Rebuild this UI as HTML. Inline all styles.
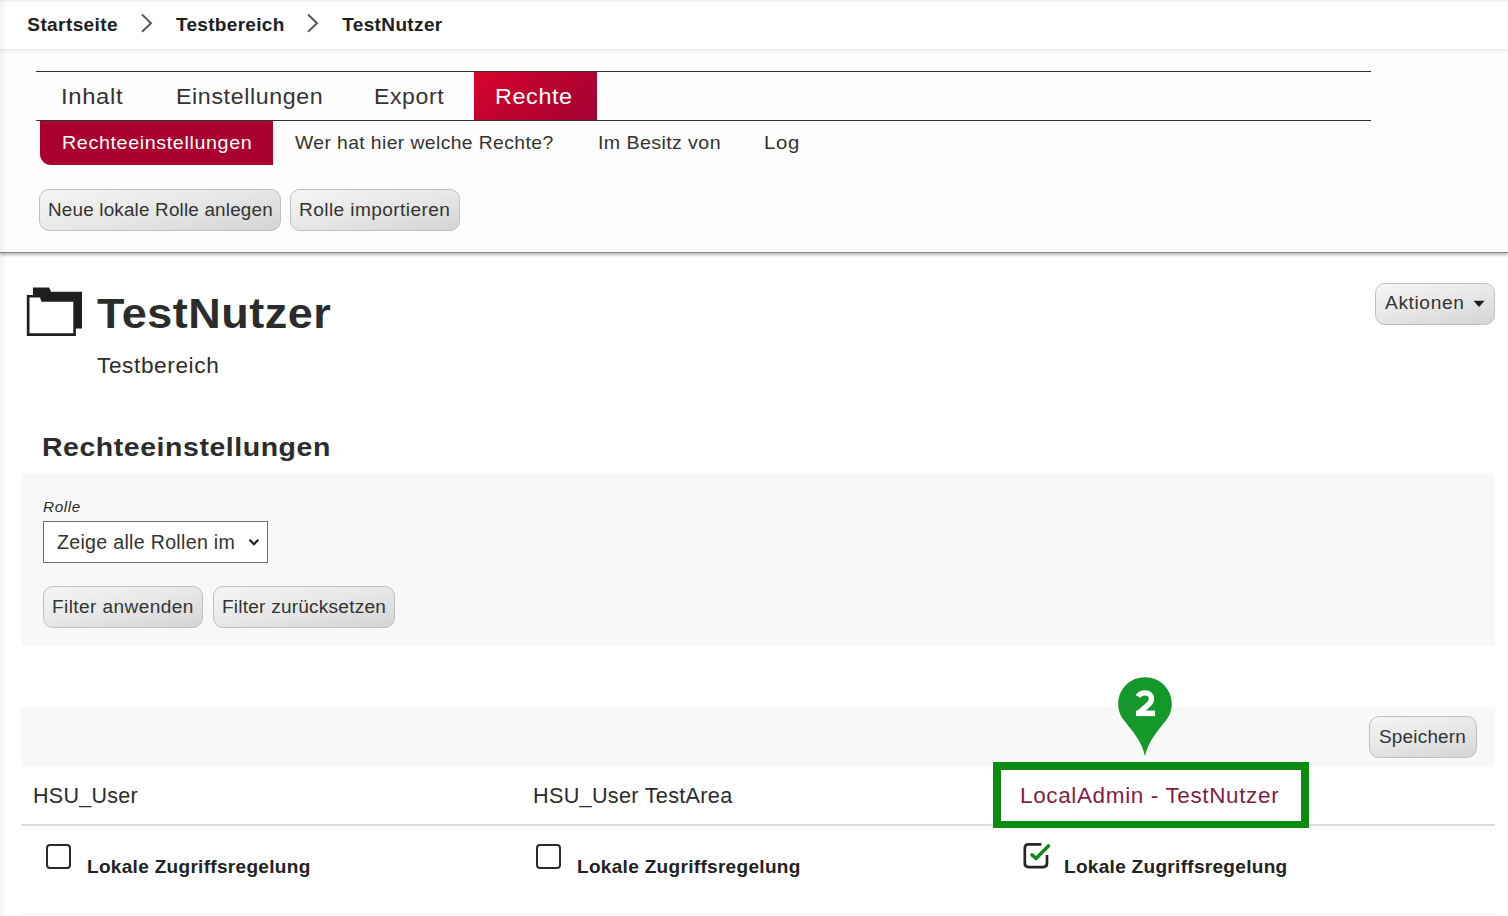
<!DOCTYPE html>
<html><head><meta charset="utf-8"><style>
html,body{margin:0;padding:0;width:1508px;height:916px;overflow:hidden;background:#fff;font-family:"Liberation Sans",sans-serif}
.a{position:absolute;box-sizing:border-box}
.t{position:absolute;white-space:pre;font-family:"Liberation Sans",sans-serif}
.btn{position:absolute;box-sizing:border-box;background:linear-gradient(168deg,#f5f5f5 0%,#e7e7e7 50%,#d4d4d4 100%);border:1px solid #c0c0c0;border-radius:10px;}
</style></head><body>
<!-- header area -->
<div class="a" style="left:0;top:0;width:1508px;height:253px;background:#fdfdfd;border-bottom:1px solid #858585;box-shadow:0 2px 3px rgba(0,0,0,.28)"></div>
<div class="a" style="left:0;top:0;width:1508px;height:49px;background:linear-gradient(#ececec 0,#fff 3px);box-shadow:0 1px 4px rgba(0,0,0,.12)"></div>
<svg class="a" style="left:0;top:0" width="500" height="48">
<path d="M142,14.5 L151,23.2 L142,31.8" fill="none" stroke="#5a5a5a" stroke-width="2"/>
<path d="M308,14.5 L317,23.2 L308,31.8" fill="none" stroke="#5a5a5a" stroke-width="2"/>
</svg>
<div class="a" style="left:36px;top:71px;width:1335px;height:1px;background:#303030"></div>
<div class="a" style="left:474px;top:72px;width:123px;height:48px;background:linear-gradient(135deg,#d9042c 0%,#b7022f 55%,#a30234 100%)"></div>
<div class="a" style="left:36px;top:120px;width:1335px;height:1px;background:#303030"></div>
<div class="a" style="left:40px;top:121px;width:233px;height:44px;background:#a9002f;border-bottom-left-radius:11px"></div>
<div class="btn" style="left:39px;top:189px;width:242px;height:42px"></div>
<div class="btn" style="left:290px;top:189px;width:170px;height:42px"></div>
<!-- content -->
<svg class="a" style="left:20px;top:280px" width="70" height="62" viewBox="0 0 70 62">
<path d="M6.8,14.9 H12.9 V7.4 H29.1 L31.1,11.8 H62 V48.4 H55.9 V55.9 H6.8 Z" fill="#1e1e1e"/>
<path d="M9.5,17.5 H20 L21.5,21.7 H53.3 V53.3 H9.5 Z" fill="#fff"/>
</svg>
<div class="btn" style="left:1375px;top:283px;width:120px;height:42px"></div>
<svg class="a" style="left:1470px;top:298px" width="20" height="12"><path d="M3.5,2.7 H14.6 L9.05,8.9 Z" fill="#1e1e1e"/></svg>
<div class="a" style="left:21px;top:473px;width:1474px;height:173px;background:#f8f8f8"></div>
<div class="a" style="left:43px;top:521px;width:225px;height:42px;background:#fff;border:1.5px solid #6f6f6f"></div>
<svg class="a" style="left:240px;top:530px" width="30" height="24"><path d="M9.5,9.8 L13.9,14.3 L18.3,9.8" fill="none" stroke="#222" stroke-width="2.2"/></svg>
<div class="btn" style="left:43px;top:586px;width:160px;height:42px"></div>
<div class="btn" style="left:213px;top:586px;width:182px;height:42px"></div>
<div class="a" style="left:21px;top:707px;width:1474px;height:60px;background:#f8f8f8"></div>
<div class="btn" style="left:1369px;top:716px;width:108px;height:42px"></div>
<div class="a" style="left:21px;top:824px;width:1474px;height:2px;background:#dcdcdc"></div>
<div class="a" style="left:21px;top:913px;width:1474px;height:1px;background:#f0f0f0"></div>
<!-- checkboxes -->
<div class="a" style="left:45.5px;top:843.5px;width:25px;height:25px;border:2.8px solid #2a2a2a;border-radius:4px"></div>
<div class="a" style="left:535.5px;top:843.5px;width:25px;height:25px;border:2.8px solid #2a2a2a;border-radius:4px"></div>
<svg class="a" style="left:1015px;top:835px" width="45" height="40">
<path d="M26.4,9.4 H13.6 Q9.8,9.4 9.8,13.2 V28.3 Q9.8,32.1 13.6,32.1 H28.2 Q32,32.1 32,28.3 V19.9" fill="none" stroke="#262626" stroke-width="2.7"/>
<path d="M17,19.9 L21,23.4 L33.4,10.9" fill="none" stroke="#10891a" stroke-width="3.5" stroke-linecap="round" stroke-linejoin="round"/>
</svg>
<!-- annotation -->
<div class="a" style="left:993px;top:762px;width:316px;height:65.5px;border:8px solid #0a8c12;border-bottom-width:7.2px"></div>
<svg class="a" style="left:1110px;top:670px" width="70" height="92" viewBox="0 0 70 92">
<path d="M35,7.2 C50,7.2 61.8,19.2 61.8,33.9 C61.8,41 59.2,46.2 55.5,51 C47,61.5 38,72 35,86.2 C32,72 23,61.5 14.5,51 C10.8,46.2 8.2,41 8.2,33.9 C8.2,19.2 20,7.2 35,7.2 Z" fill="#15982a"/>
<path d="M28.2,26.5 C29.5,24 32,22.9 35,22.9 C39,22.9 41.5,25.3 41.5,28.8 C41.5,31 40.5,32.6 38.5,34.6 L28.5,43.4" fill="none" stroke="#fff" stroke-width="5.4"/>
<rect x="26.1" y="40.6" width="19" height="5.5" fill="#fff"/>
</svg>
<div class="t" style="left:27.30px;top:14.76px;font-size:19.00px;line-height:19.00px;font-weight:700;font-style:normal;letter-spacing:0.411px;color:#202020;">Startseite</div>
<div class="t" style="left:176.00px;top:14.76px;font-size:19.00px;line-height:19.00px;font-weight:700;font-style:normal;letter-spacing:0.300px;color:#202020;">Testbereich</div>
<div class="t" style="left:342.20px;top:14.76px;font-size:19.00px;line-height:19.00px;font-weight:700;font-style:normal;letter-spacing:0.367px;color:#202020;">TestNutzer</div>
<div class="t" style="left:61.48px;top:86.10px;font-size:22.20px;line-height:22.20px;font-weight:400;font-style:normal;letter-spacing:0.600px;color:#333;transform-origin:0 0;transform:scaleX(1.0746);">Inhalt</div>
<div class="t" style="left:175.71px;top:86.10px;font-size:22.20px;line-height:22.20px;font-weight:400;font-style:normal;letter-spacing:0.600px;color:#333;transform-origin:0 0;transform:scaleX(1.0452);">Einstellungen</div>
<div class="t" style="left:373.73px;top:86.00px;font-size:22.20px;line-height:22.20px;font-weight:400;font-style:normal;letter-spacing:0.600px;color:#333;transform-origin:0 0;transform:scaleX(1.0369);">Export</div>
<div class="t" style="left:495.30px;top:86.00px;font-size:22.20px;line-height:22.20px;font-weight:400;font-style:normal;letter-spacing:0.600px;color:#fff;transform-origin:0 0;transform:scaleX(1.0514);">Rechte</div>
<div class="t" style="left:61.99px;top:132.71px;font-size:19.00px;line-height:19.00px;font-weight:400;font-style:normal;letter-spacing:0.600px;color:#fff;transform-origin:0 0;transform:scaleX(1.0367);">Rechteeinstellungen</div>
<div class="t" style="left:295.05px;top:132.51px;font-size:19.00px;line-height:19.00px;font-weight:400;font-style:normal;letter-spacing:0.400px;color:#333;transform-origin:0 0;transform:scaleX(1.0162);">Wer hat hier welche Rechte?</div>
<div class="t" style="left:598.14px;top:132.61px;font-size:19.00px;line-height:19.00px;font-weight:400;font-style:normal;letter-spacing:0.400px;color:#333;transform-origin:0 0;transform:scaleX(1.0311);">Im Besitz von</div>
<div class="t" style="left:764.06px;top:132.61px;font-size:19.00px;line-height:19.00px;font-weight:400;font-style:normal;letter-spacing:0.600px;color:#333;transform-origin:0 0;transform:scaleX(1.0695);">Log</div>
<div class="t" style="left:47.67px;top:200.98px;font-size:18.80px;line-height:18.80px;font-weight:400;font-style:normal;letter-spacing:0.200px;color:#333;transform-origin:0 0;transform:scaleX(1.0027);">Neue lokale Rolle anlegen</div>
<div class="t" style="left:299.27px;top:200.98px;font-size:18.80px;line-height:18.80px;font-weight:400;font-style:normal;letter-spacing:0.400px;color:#333;transform-origin:0 0;transform:scaleX(1.0172);">Rolle importieren</div>
<div class="t" style="left:97.11px;top:292.63px;font-size:42.01px;line-height:42.01px;font-weight:600;font-style:normal;letter-spacing:0.500px;color:#2c2c2c;transform-origin:0 0;transform:scaleX(1.0699);">TestNutzer</div>
<div class="t" style="left:97.22px;top:354.72px;font-size:21.95px;line-height:21.95px;font-weight:400;font-style:normal;letter-spacing:0.600px;color:#2c2c2c;transform-origin:0 0;transform:scaleX(1.0302);">Testbereich</div>
<div class="t" style="left:1385.11px;top:293.78px;font-size:18.80px;line-height:18.80px;font-weight:400;font-style:normal;letter-spacing:0.600px;color:#333;transform-origin:0 0;transform:scaleX(1.0197);">Aktionen</div>
<div class="t" style="left:42.17px;top:434.64px;font-size:25.58px;line-height:25.58px;font-weight:700;font-style:normal;letter-spacing:0.500px;color:#2c2c2c;transform-origin:0 0;transform:scaleX(1.1125);">Rechteeinstellungen</div>
<div class="t" style="left:42.55px;top:500.29px;font-size:14.54px;line-height:14.54px;font-weight:400;font-style:italic;letter-spacing:0.600px;color:#2c2c2c;transform-origin:0 0;transform:scaleX(1.0523);">Rolle</div>
<div class="t" style="left:56.81px;top:532.73px;font-size:19.33px;line-height:19.33px;font-weight:400;font-style:normal;letter-spacing:0.300px;color:#333;transform-origin:0 0;transform:scaleX(1.0135);">Zeige alle Rollen im</div>
<div class="t" style="left:51.87px;top:598.08px;font-size:18.80px;line-height:18.80px;font-weight:400;font-style:normal;letter-spacing:0.400px;color:#333;transform-origin:0 0;transform:scaleX(1.0146);">Filter anwenden</div>
<div class="t" style="left:221.97px;top:598.08px;font-size:18.80px;line-height:18.80px;font-weight:400;font-style:normal;letter-spacing:0.200px;color:#333;transform-origin:0 0;transform:scaleX(1.0164);">Filter zurücksetzen</div>
<div class="t" style="left:1379.45px;top:727.58px;font-size:18.80px;line-height:18.80px;font-weight:400;font-style:normal;letter-spacing:0.200px;color:#333;transform-origin:0 0;transform:scaleX(1.0083);">Speichern</div>
<div class="t" style="left:33.34px;top:785.78px;font-size:21.40px;line-height:21.40px;font-weight:400;font-style:normal;letter-spacing:0.300px;color:#2c2c2c;transform-origin:0 0;transform:scaleX(1.0039);">HSU_User</div>
<div class="t" style="left:532.88px;top:785.78px;font-size:21.40px;line-height:21.40px;font-weight:400;font-style:normal;letter-spacing:0.300px;color:#2c2c2c;transform-origin:0 0;transform:scaleX(1.0113);">HSU_User TestArea</div>
<div class="t" style="left:1020.30px;top:785.98px;font-size:21.40px;line-height:21.40px;font-weight:400;font-style:normal;letter-spacing:0.600px;color:#7d1f47;transform-origin:0 0;transform:scaleX(1.0522);">LocalAdmin - TestNutzer</div>
<div class="t" style="left:86.77px;top:857.92px;font-size:18.40px;line-height:18.40px;font-weight:700;font-style:normal;letter-spacing:0.300px;color:#222;transform-origin:0 0;transform:scaleX(1.0332);">Lokale Zugriffsregelung</div>
<div class="t" style="left:576.67px;top:857.92px;font-size:18.40px;line-height:18.40px;font-weight:700;font-style:normal;letter-spacing:0.300px;color:#222;transform-origin:0 0;transform:scaleX(1.0337);">Lokale Zugriffsregelung</div>
<div class="t" style="left:1064.37px;top:857.92px;font-size:18.40px;line-height:18.40px;font-weight:700;font-style:normal;letter-spacing:0.300px;color:#222;transform-origin:0 0;transform:scaleX(1.0328);">Lokale Zugriffsregelung</div>
<div class="a" style="left:0;top:0;width:7px;height:916px;background:linear-gradient(to right,rgba(0,0,0,.05),rgba(0,0,0,0))"></div>
</body></html>
